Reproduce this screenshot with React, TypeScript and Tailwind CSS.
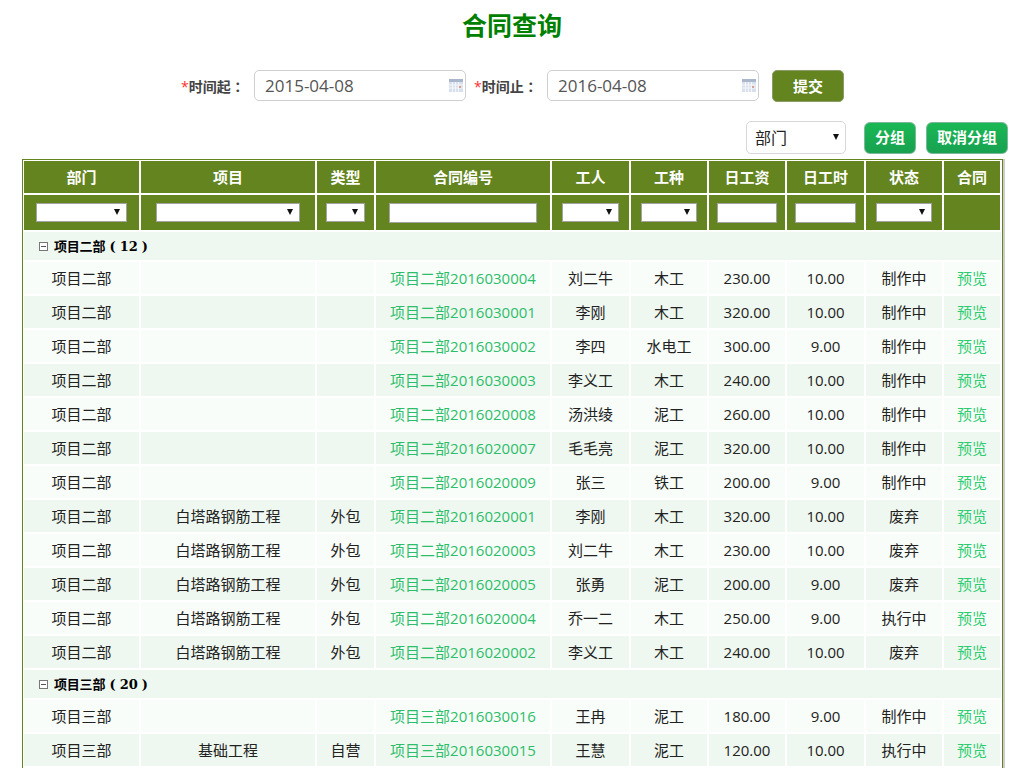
import React from "react";

const cjk = "font-['Open_Sans','Noto_Sans_CJK_SC',sans-serif]";

type Row = [string, string, string, string, string, string, string, string, string];

const group2: Row[] = [
  ["项目二部", "", "", "项目二部2016030004", "刘二牛", "木工", "230.00", "10.00", "制作中"],
  ["项目二部", "", "", "项目二部2016030001", "李刚", "木工", "320.00", "10.00", "制作中"],
  ["项目二部", "", "", "项目二部2016030002", "李四", "水电工", "300.00", "9.00", "制作中"],
  ["项目二部", "", "", "项目二部2016030003", "李义工", "木工", "240.00", "10.00", "制作中"],
  ["项目二部", "", "", "项目二部2016020008", "汤洪绫", "泥工", "260.00", "10.00", "制作中"],
  ["项目二部", "", "", "项目二部2016020007", "毛毛亮", "泥工", "320.00", "10.00", "制作中"],
  ["项目二部", "", "", "项目二部2016020009", "张三", "铁工", "200.00", "9.00", "制作中"],
  ["项目二部", "白塔路钢筋工程", "外包", "项目二部2016020001", "李刚", "木工", "320.00", "10.00", "废弃"],
  ["项目二部", "白塔路钢筋工程", "外包", "项目二部2016020003", "刘二牛", "木工", "230.00", "10.00", "废弃"],
  ["项目二部", "白塔路钢筋工程", "外包", "项目二部2016020005", "张勇", "泥工", "200.00", "9.00", "废弃"],
  ["项目二部", "白塔路钢筋工程", "外包", "项目二部2016020004", "乔一二", "木工", "250.00", "9.00", "执行中"],
  ["项目二部", "白塔路钢筋工程", "外包", "项目二部2016020002", "李义工", "木工", "240.00", "10.00", "废弃"],
];

const group3: Row[] = [
  ["项目三部", "", "", "项目三部2016030016", "王冉", "泥工", "180.00", "9.00", "制作中"],
  ["项目三部", "基础工程", "自营", "项目三部2016030015", "王慧", "泥工", "120.00", "10.00", "执行中"],
];

const headers = ["部门", "项目", "类型", "合同编号", "工人", "工种", "日工资", "日工时", "状态", "合同"];
const colWidths = [117, 176, 59, 176, 79, 78, 78, 79, 78, 58];

function CalendarIcon() {
  return (
    <svg width="14" height="13" viewBox="0 0 14 13" className="absolute right-[3px] top-[9px]">
      <rect x="0" y="0" width="14" height="13" fill="#d8e0ee" />
      <rect x="0" y="0" width="14" height="3" fill="#aab6cc" />
      <path d="M0 6h14M0 9h14M3.5 3v10M6.5 3v10M9.5 3v10" stroke="#f4f6fa" strokeWidth="1" />
      <rect x="10" y="7" width="2" height="2" fill="#d9a090" />
    </svg>
  );
}

function DateField({ value }: { value: string }) {
  return (
    <div className="relative w-[212px] h-[31px]">
      <input
        readOnly
        value={value}
        className="w-full h-full border border-[#cfcfcf] rounded-[5px] pl-[10px] text-[17px] text-[#555] bg-white outline-none"
      />
      <CalendarIcon />
    </div>
  );
}

function FieldLabel({ text, className }: { text: string; className: string }) {
  return (
    <span className={`leading-[32px] text-[14px] font-bold text-[#444] ${className}`}>
      <span className="text-[#f33] font-normal">*</span>
      {text}
      <span className="font-['Noto_Sans_CJK_TC',sans-serif]">：</span>
    </span>
  );
}

function FilterSelect({ width }: { width: string }) {
  return (
    <div className={`relative mx-auto h-[19px] ${width}`}>
      <select className="block appearance-none w-full h-full bg-white border border-[#a3a3a3] rounded-none" />
      <svg width="6" height="6" viewBox="0 0 6 6" className="absolute right-[7px] top-[6px]">
        <path d="M0 0h6L3 6z" fill="#111" />
      </svg>
    </div>
  );
}

function FilterInput({ width }: { width: string }) {
  return <input readOnly className={`block mx-auto h-[20px] bg-white border border-[#a3a3a3] ${width}`} />;
}

function GroupRow({ label }: { label: string }) {
  return (
    <tr className="h-[30px] bg-[#eff8f0]">
      <td colSpan={10} className="border-2 border-white border-r-0 pl-[15px] pb-[2px] text-left">
        <span className="inline-flex items-center gap-[6px] text-[13px] tracking-[-0.2px] font-bold text-black font-['DejaVu_Serif','Noto_Sans_CJK_SC',serif]">
          <span className="relative w-[9px] h-[9px] border border-[#777] bg-white">
            <span className="absolute left-[1px] top-[3px] w-[5px] h-px bg-[#555]" />
          </span>
          {label}
        </span>
      </td>
    </tr>
  );
}

function DataRow({ row, index }: { row: Row; index: number }) {
  return (
    <tr className={`h-[34px] text-[15px] text-[#222] ${index % 2 === 0 ? "bg-[#f8fdf9]" : "bg-[#eff8f0]"}`}>
      {row.map((cell, i) => (
        <td key={i} className={`border-2 border-white text-center p-0 whitespace-nowrap ${i === 3 ? "text-[#2ebd6b]" : ""}`}>
          {cell}
        </td>
      ))}
      <td className="border-2 border-white text-center p-0 text-[#2ecc71]">预览</td>
    </tr>
  );
}

export default function App() {
  return (
    <div className={`h-screen overflow-hidden bg-white ${cjk}`}>
      <h1 className="pt-[6px] h-[70px] text-center text-[25px] leading-[38px] font-bold text-[#008000]">合同查询</h1>

      {/* date filters */}
      <div className="flex items-start h-[32px] pl-[181px]">
        <FieldLabel text="时间起" className="w-[73px]" />
        <DateField value="2015-04-08" />
        <FieldLabel text="时间止" className="w-[81px] pl-[8px]" />
        <DateField value="2016-04-08" />
        <button className="ml-[13px] w-[72px] h-[32px] rounded-[5px] bg-[#63841f] border border-[#8a9a68] text-white text-[15px] font-bold">
          提交
        </button>
      </div>

      {/* group by */}
      <div className="flex items-center h-[33px] mt-[19px] pl-[746px]">
        <div className="relative w-[100px] h-[33px]">
          <select className="appearance-none w-full h-full pl-[8px] bg-white border border-[#d8d8d8] rounded-[5px] text-[16px] text-[#222]">
            <option>部门</option>
          </select>
          <svg width="6" height="6" viewBox="0 0 6 6" className="absolute right-[7px] top-[13px]">
            <path d="M0 0h6L3 6z" fill="#111" />
          </svg>
        </div>
        <button className="ml-[18px] w-[52px] h-[32px] rounded-[6px] bg-gradient-to-b from-[#1ab854] to-[#18a150] border border-[#7fb79a] text-white text-[15px] font-bold">
          分组
        </button>
        <button className="ml-[10px] w-[82px] h-[32px] rounded-[6px] bg-gradient-to-b from-[#1ab854] to-[#18a150] border border-[#7fb79a] text-white text-[15px] font-bold whitespace-nowrap">
          取消分组
        </button>
      </div>

      {/* contracts, runs on past the bottom of the window */}
      <div className="mt-[5px] ml-[22px] w-[981px] pb-[20px] border border-[#63841f] shadow-[2px_0_0_#cccccc] overflow-hidden">
        <table className="-ml-px -mt-px w-[979px] table-fixed border-collapse">
          <colgroup>
            {colWidths.map((w, i) => (
              <col key={i} style={{ width: w }} />
            ))}
          </colgroup>
          <thead>
            <tr className="h-[34px] bg-[#63841f]">
              {headers.map((h) => (
                <th key={h} className="border-2 border-white text-center text-[15px] font-bold text-white p-0">
                  {h}
                </th>
              ))}
            </tr>
            <tr className="h-[37px] bg-[#63841f]">
              <th className="border-2 border-white p-0"><FilterSelect width="w-[91px]" /></th>
              <th className="border-2 border-white p-0"><FilterSelect width="w-[144px]" /></th>
              <th className="border-2 border-white p-0"><FilterSelect width="w-[39px]" /></th>
              <th className="border-2 border-white p-0"><FilterInput width="w-[148px]" /></th>
              <th className="border-2 border-white p-0"><FilterSelect width="w-[57px]" /></th>
              <th className="border-2 border-white p-0"><FilterSelect width="w-[56px]" /></th>
              <th className="border-2 border-white p-0"><FilterInput width="w-[60px]" /></th>
              <th className="border-2 border-white p-0"><FilterInput width="w-[61px]" /></th>
              <th className="border-2 border-white p-0"><FilterSelect width="w-[56px]" /></th>
              <th className="border-2 border-white p-0" />
            </tr>
          </thead>
          <tbody>
            <GroupRow label="项目二部 ( 12 )" />
            {group2.map((row, i) => (
              <DataRow key={row[3]} row={row} index={i} />
            ))}
            <GroupRow label="项目三部 ( 20 )" />
            {group3.map((row, i) => (
              <DataRow key={row[3]} row={row} index={i} />
            ))}
          </tbody>
        </table>
      </div>
    </div>
  );
}
